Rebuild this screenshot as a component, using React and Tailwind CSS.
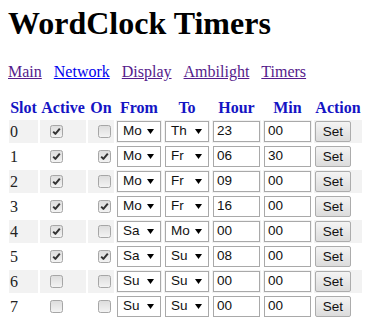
import React from "react";

const rows = [
  { a: true, o: false, f: "Mo", t: "Th", h: "23", m: "00" },
  { a: true, o: true, f: "Mo", t: "Fr", h: "06", m: "30" },
  { a: true, o: false, f: "Mo", t: "Fr", h: "09", m: "00" },
  { a: true, o: true, f: "Mo", t: "Fr", h: "16", m: "00" },
  { a: true, o: false, f: "Sa", t: "Mo", h: "00", m: "00" },
  { a: true, o: true, f: "Sa", t: "Su", h: "08", m: "00" },
  { a: false, o: false, f: "Su", t: "Su", h: "00", m: "00" },
  { a: false, o: false, f: "Su", t: "Su", h: "00", m: "00" },
];

function Check({ checked }) {
  return (
    <svg width="13" height="13" viewBox="0 0 13 13">
      <defs>
        <linearGradient id="cbg" x1="0" y1="0" x2="0" y2="1">
          <stop offset="0" stopColor="#dcdcdc" />
          <stop offset="1" stopColor="#f4f4f4" />
        </linearGradient>
      </defs>
      <rect x="0.5" y="0.5" width="12" height="12" rx="2" fill="url(#cbg)" stroke="#a6a6a6" />
      {checked && (
        <path d="M3.2 6.6 L5.4 8.9 L9.8 3.6" fill="none" stroke="#333" strokeWidth="2" strokeLinejoin="round" />
      )}
    </svg>
  );
}

function Select({ value }) {
  return (
    <div className="w-[44px] h-[21px] border border-[#a9a9a9] bg-white flex items-center justify-between pl-[5px] pr-[6px] font-['Liberation_Sans',Arial,sans-serif] text-[13.5px] text-[#111]">
      <span>{value}</span>
      <svg width="7" height="5" viewBox="0 0 7 5">
        <path d="M0 0 H7 L3.5 5 Z" fill="#000" />
      </svg>
    </div>
  );
}

function Field({ value }) {
  return (
    <div className="w-[47px] h-[21px] border border-[#a9a9a9] bg-white flex items-center pl-[3px] font-['Liberation_Sans',Arial,sans-serif] text-[13.5px] text-[#111]">
      {value}
    </div>
  );
}

export default function App() {
  const head = ["Slot", "Active", "On", "From", "To", "Hour", "Min", "Action"];
  return (
    <div className="bg-white px-[8px] pt-[5px] font-['Liberation_Serif','Times_New_Roman',serif] text-black">
      <h1 className="text-[32px] font-bold leading-[37px] mb-[21px]">WordClock Timers</h1>
      <div className="flex gap-[12px] text-[16px] leading-[18px] mb-[17px]">
        <a href="#" className="underline text-[#551a8b]">Main</a>
        <a href="#" className="underline text-[#0000ee]">Network</a>
        <a href="#" className="underline text-[#551a8b]">Display</a>
        <a href="#" className="underline text-[#551a8b]">Ambilight</a>
        <a href="#" className="underline text-[#551a8b]">Timers</a>
      </div>
      <div className="ml-[1px] grid grid-cols-[29px_46px_26px_46px_46px_49px_49px_48px] gap-[2px]">
        {head.map((h) => (
          <div key={h} className="h-[20px] flex items-center justify-center font-bold text-[16px] text-[#1414c4]">
            {h}
          </div>
        ))}
        {rows.map((r, i) => {
          const bg = i % 2 === 0 ? "bg-[#f2f2f2]" : "bg-white";
          return (
            <React.Fragment key={i}>
              <div className={`h-[23px] flex items-center pl-[1px] text-[16px] text-[#222] ${bg}`}>{i}</div>
              <div className={`h-[23px] flex items-center pl-[10px] ${bg}`}>
                <Check checked={r.a} />
              </div>
              <div className={`h-[23px] flex items-center pl-[10px] ${bg}`}>
                <Check checked={r.o} />
              </div>
              <div className={`h-[23px] flex items-center pl-[1px] ${bg}`}>
                <Select value={r.f} />
              </div>
              <div className={`h-[23px] flex items-center pl-[1px] ${bg}`}>
                <Select value={r.t} />
              </div>
              <div className={`h-[23px] flex items-center pl-[1px] ${bg}`}>
                <Field value={r.h} />
              </div>
              <div className={`h-[23px] flex items-center pl-[1px] ${bg}`}>
                <Field value={r.m} />
              </div>
              <div className={`h-[23px] flex items-center pl-[1px] ${bg}`}>
                <button className="w-[36px] h-[21px] border border-[#acacac] rounded-[2px] bg-linear-to-b from-[#f4f4f4] to-[#dcdcdc] font-['Liberation_Sans',Arial,sans-serif] text-[13.5px] text-[#111] leading-none">
                  Set
                </button>
              </div>
            </React.Fragment>
          );
        })}
      </div>
    </div>
  );
}
